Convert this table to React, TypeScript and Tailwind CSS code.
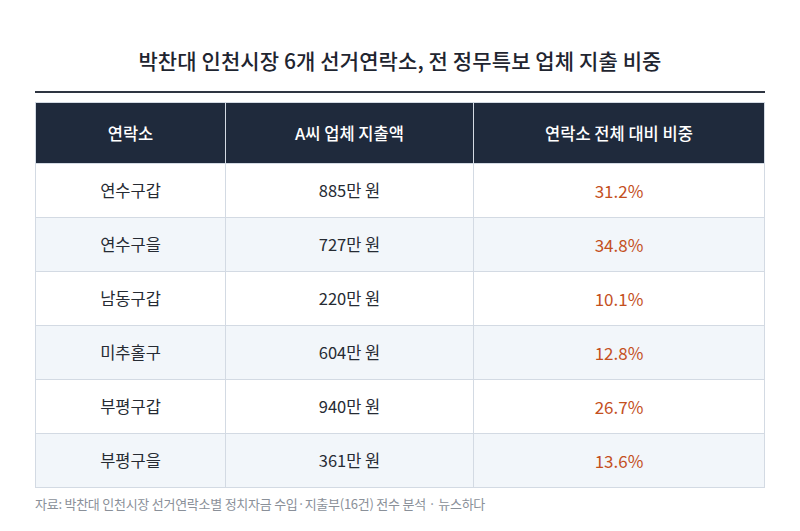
import React from "react";

const rows = [
  { name: "연수구갑", amount: "885만 원", pct: "31.2%" },
  { name: "연수구을", amount: "727만 원", pct: "34.8%" },
  { name: "남동구갑", amount: "220만 원", pct: "10.1%" },
  { name: "미추홀구", amount: "604만 원", pct: "12.8%" },
  { name: "부평구갑", amount: "940만 원", pct: "26.7%" },
  { name: "부평구을", amount: "361만 원", pct: "13.6%" },
];

export default function App() {
  return (
    <div
      className="w-[800px] h-[531px] bg-white px-[35px] pt-[45px]"
      style={{ fontFamily: '"Noto Sans CJK KR", "Noto Sans", sans-serif' }}
    >
      <h1 className="text-center text-[21px] leading-[30px] font-medium text-[#1f2530] tracking-[0.1px]">
        박찬대 인천시장 6개 선거연락소, 전 정무특보 업체 지출 비중
      </h1>
      <div className="mt-[16px] h-[2px] bg-[#2e3541]" />
      <table className="mt-[9px] w-full border-collapse border border-[#d3dae3] table-fixed">
        <colgroup>
          <col className="w-[190px]" />
          <col className="w-[248px]" />
          <col />
        </colgroup>
        <thead>
          <tr className="bg-[#1f2a3c] h-[61px]">
            <th className="border border-[#d3dae3] text-white text-[16.5px] font-medium">연락소</th>
            <th className="border border-[#d3dae3] text-white text-[16.5px] font-medium">A씨 업체 지출액</th>
            <th className="border border-[#d3dae3] text-white text-[16.5px] font-medium">연락소 전체 대비 비중</th>
          </tr>
        </thead>
        <tbody>
          {rows.map((r, i) => (
            <tr key={r.name} className={`h-[54px] ${i % 2 === 1 ? "bg-[#f2f6fa]" : "bg-white"}`}>
              <td className="border border-[#d3dae3] text-center text-[16.5px] text-[#262b33]">{r.name}</td>
              <td className="border border-[#d3dae3] text-center text-[16.5px] text-[#262b33]">{r.amount}</td>
              <td className="border border-[#d3dae3] text-center text-[17px] text-[#c4501e]">{r.pct}</td>
            </tr>
          ))}
        </tbody>
      </table>
      <p className="mt-[7px] text-[13px] leading-[18px] text-[#8a9099] tracking-[-0.25px]">
        자료: 박찬대 인천시장 선거연락소별 정치자금 수입·지출부(16건) 전수 분석 · 뉴스하다
      </p>
    </div>
  );
}
